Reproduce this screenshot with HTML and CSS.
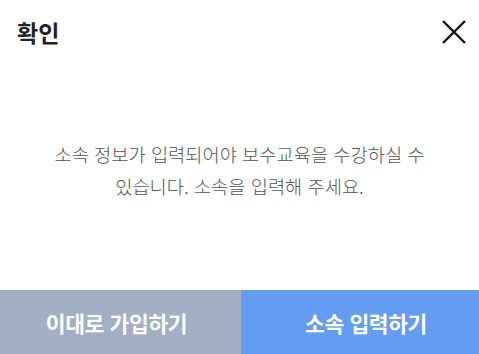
FILE: index.html
```html
<!DOCTYPE html>
<html lang="ko">
<head>
  <meta charset="UTF-8" />
  <title>확인</title>
  <link rel="stylesheet" href="styles.css">
</head>
<body>
  <div class="modal">
    <header class="modal-header">
      <h1>확인</h1>
      <button class="close-btn" aria-label="닫기">
        <svg width="24" height="24" viewBox="0 0 24 24">
          <path d="M1 1 L23 23 M23 1 L1 23" stroke="#111" stroke-width="2.4" fill="none" />
        </svg>
      </button>
    </header>
    <div class="modal-body">
      <p>소속 정보가 입력되어야 보수교육을 수강하실 수<br>있습니다. 소속을 입력해 주세요.</p>
    </div>
    <div class="modal-footer">
      <button class="btn btn-gray">이대로 가입하기</button>
      <button class="btn btn-blue">소속 입력하기</button>
    </div>
  </div>
</body>
</html>
```

FILE: styles.css
```css
body {
  margin: 0;
  font-family: "Noto Sans CJK KR", "Noto Sans", sans-serif;
  background: #fff;
}
.modal {
  width: 479px;
  height: 354px;
  display: flex;
  flex-direction: column;
  background: #fff;
}
.modal-header {
  display: flex;
  justify-content: space-between;
  align-items: center;
  padding: 12px 13px 0 17px;
  height: 40px;
}
.modal-header h1 {
  margin: 0;
  font-size: 23px;
  font-weight: bold;
  color: #222;
  letter-spacing: 0;
}
.close-btn {
  border: none;
  background: none;
  padding: 0;
  cursor: pointer;
  display: flex;
}
.modal-body {
  flex: 1;
  display: flex;
  align-items: center;
  justify-content: center;
  padding-bottom: 2px;
}
.modal-body p {
  margin: 0;
  text-align: center;
  font-size: 18.7px;
  font-weight: 300;
  line-height: 32px;
  color: #555;
}
.modal-footer {
  display: flex;
  height: 64px;
}
.btn {
  border: none;
  color: #fff;
  font-family: inherit;
  font-size: 21.5px;
  font-weight: bold;
  letter-spacing: -0.4px;
  cursor: pointer;
}
.btn-gray {
  width: 241px;
  padding: 0 8px 0 0;
  background: #a2afc5;
}
.btn-blue {
  flex: 1;
  padding: 0 0 0 12px;
  background: #639cf0;
}
```
